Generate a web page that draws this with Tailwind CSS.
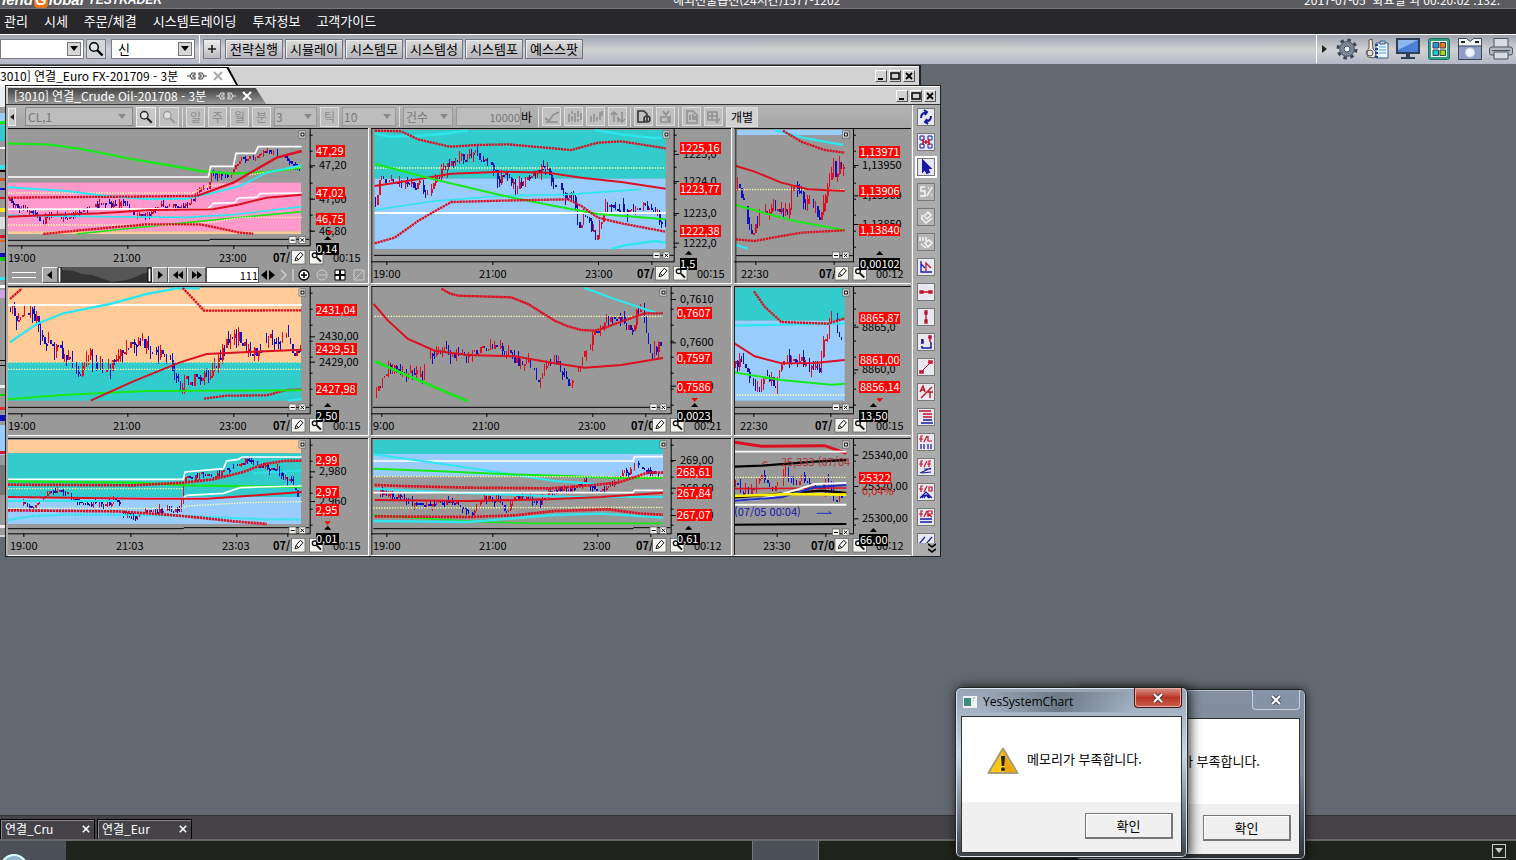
<!DOCTYPE html>
<html lang="ko">
<head>
<meta charset="utf-8">
<title>Hi-Friend Global YesTrader</title>
<script src="https://cdn.jsdelivr.net/npm/@tailwindcss/browser@4"></script>
</head>
<body class="flex h-screen flex-col overflow-hidden bg-[#636970] font-['Noto_Sans_CJK_KR',sans-serif] text-xs text-black">

<svg class="hidden">
  <symbol id="lens" viewBox="0 0 16 16"><circle cx="6" cy="6" r="4.3" fill="#e8eef2" fill-opacity=".7" stroke="currentColor" stroke-width="1.5"/><path d="M9.2 9.2L14.5 14.5" stroke="currentColor" stroke-width="2.4"/></symbol>
  <symbol id="link" viewBox="0 0 20 10"><path d="M0 5h3l2-3h3v2H6v2h2v2H5L3 5M20 5h-3l-2-3h-3v2h2v2h-2v2h3l2-3" fill="none" stroke="currentColor" stroke-width="1.1"/></symbol>
  <symbol id="close" viewBox="0 0 10 10"><path d="M1 1l8 8M9 1l-8 8" stroke="currentColor" stroke-width="2"/></symbol>
  <symbol id="down" viewBox="0 0 8 5"><path d="M0 0h8L4 5z" fill="currentColor"/></symbol>
</svg>

<header class="shrink-0">
  <div class="flex h-[9px] items-end overflow-hidden border-b border-[#77777c] bg-[#5b5b60] text-white">
    <p class="-ml-[18px] flex h-4 flex-1 items-center font-['Liberation_Sans',sans-serif] text-[15px] leading-4 font-bold italic">-Friend <span class="mx-px h-4 w-3.5 rounded-sm bg-[#e8751a] text-center">G</span>lobal <span class="ml-1 text-xs">YESTRADER</span></p>
    <p class="h-4 flex-1 pl-[60px] text-xs leading-4">해외선물옵션(24시간)1577-1202</p>
    <p class="h-4 pr-4 text-xs leading-4">2017-07-05 &nbsp;화요일 외 00:20:02 .132.</p>
  </div>
  <nav class="flex h-[25px] items-center gap-4 bg-[#28272c] pb-0.5 pl-1 text-[13px] text-white">
    <a href="#">관리</a><a href="#">시세</a><a href="#">주문/체결</a><a href="#">시스템트레이딩</a><a href="#">투자정보</a><a href="#">고객가이드</a>
  </nav>
  <div class="flex h-[30px] items-center border-t border-white bg-linear-to-b from-[#9da1ae] via-[#d2d2d5] to-[#b3b8c8] pb-0.5">
    <label class="relative flex h-5 w-[84px] items-center border border-[#777c88] bg-white"><select aria-label="종목" class="h-full w-full appearance-none bg-white"><option></option></select><span class="pointer-events-none absolute right-0.5 grid size-3.5 place-items-center border border-[#777] bg-[#d6d6d6]"><svg class="h-[5px] w-2"><use href="#down"/></svg></span></label>
    <button aria-label="검색" class="ml-0.5 grid h-5 w-5 place-items-center border border-[#777c88] bg-[#d4d6da]"><svg class="size-4"><use href="#lens"/></svg></button>
    <label class="relative ml-[5px] flex h-5 w-[84px] items-center border border-[#777c88] bg-white"><select aria-label="구분" class="h-full w-full appearance-none bg-white pl-1.5 text-[13px]"><option>신</option></select><span class="pointer-events-none absolute right-0.5 grid size-3.5 place-items-center border border-[#777] bg-[#d6d6d6]"><svg class="h-[5px] w-2"><use href="#down"/></svg></span></label>
    <span class="ml-1 h-7 w-px bg-white"></span>
    <button aria-label="추가" class="ml-[3px] grid h-5 w-[18px] place-items-center border border-[#777c88] bg-linear-to-b from-[#eee] to-[#bbb]"><svg viewBox="0 0 8 8" class="size-2"><path d="M4 0v8M0 4h8" stroke="#222" stroke-width="1.6"/></svg></button>
    <div class="ml-1 flex gap-0.5" id="quick"></div>
    <div class="ml-auto flex h-[28px] items-center gap-[7px] border-l border-white pr-[3px] pl-[5px]">
      <svg viewBox="0 0 5 8" class="mr-0.5 h-2 w-[5px]"><path d="M0 0l5 4-5 4z" fill="#222"/></svg>
      <svg viewBox="0 0 22 22" class="size-[22px]"><circle cx="11" cy="11" r="8.500" fill="none" stroke="#3c4858" stroke-width="4" stroke-dasharray="3.340 3.340"/><circle cx="11" cy="11" r="5.500" fill="none" stroke="#7c8898" stroke-width="4.500"/><circle cx="11" cy="11" r="7.300" fill="none" stroke="#4d5a6a"/><circle cx="11" cy="11" r="3" fill="#f2f6fa" stroke="#3c4858"/></svg>
      <svg viewBox="0 0 24 22" class="h-[22px] w-6"><path d="M4 2l3-1 1 10 4 4-3 5-6-1-2-5 3-4z" fill="#f3ead0" stroke="#555"/><circle cx="5" cy="15" r="3" fill="#ddd" stroke="#555"/><path d="M11 5h12v15H11z" fill="#eaf5ff" stroke="#3a5f86"/><path d="M15 3h5v3h-5z" fill="#bcd" stroke="#3a5f86"/><path d="M14 9h7M14 12h7M14 15h7" stroke="#4aa9d8"/><path d="M10 7h3M10 11h3M10 15h3M10 19h3" stroke="#1646a0" stroke-width="2"/></svg>
      <svg viewBox="0 0 24 22" class="h-[22px] w-6"><path d="M0 0h24v16H0z" fill="#2d3e57"/><path d="M2 2h20v12H2z" fill="#4b7fd6"/><path d="M2 2h20L2 12z" fill="#8fb5ee"/><path d="M10 16h4v3h5v2H5v-2h5z" fill="#2d3e57"/></svg>
      <svg viewBox="0 0 22 22" class="h-[22px] w-6"><rect x=".5" y=".5" width="21" height="21" rx="2" fill="#2c9c86" stroke="#1c6f62"/><path d="M3 3h16v16H3z" fill="#f4f4e8"/><path d="M5 4.500h5.500v5.500H5z" fill="#2a94dc" stroke="#345"/><path d="M12 4.500h5.500v5.500H12z" fill="#ee7a13" stroke="#345"/><path d="M5 12h5.500v5.500H5z" fill="#13c6cf" stroke="#345"/><path d="M12 12h5.500v5.500H12z" fill="#9fdc17" stroke="#345"/></svg>
      <svg viewBox="0 0 24 22" class="h-[22px] w-6"><path d="M.5 .5h8l3.500 3 3.500-3h8v21H.5z" fill="#f2f4f7" stroke="#3c4656"/><path d="M.5 8h23v13.500H.5z" fill="#8f9fc4" stroke="#3c4656"/><path d="M3 4h4M17 4h4" stroke="#222" stroke-width="2"/><circle cx="12" cy="14.500" r="4.500" fill="#eef2fb" stroke="#cdd6ea"/></svg>
      <svg viewBox="0 0 24 22" class="h-[22px] w-6"><path d="M5 .5h14v9H5z" fill="#d8dce2" stroke="#4a5260"/><rect x=".5" y="9" width="23" height="8" rx="2" fill="#b0b7c2" stroke="#4a5260"/><path d="M5 14h14v7H5z" fill="#d8dce2" stroke="#4a5260"/><path d="M3 12.500h18" stroke="#4a5260"/></svg>
    </div>
  </div>
</header>

<main class="relative min-h-0 flex-1 overflow-hidden bg-[#636970]">
  <!-- Rear chart window -->
  <section class="absolute top-px left-0 h-[472px] w-[921px] border-t border-r-2 border-[#222] bg-[#d2d2d2] pt-px shadow-[inset_0_1px_0_#fff]">
    <div class="flex h-[18px] items-center justify-between pr-1">
      <div class="flex h-full w-[238px] items-center bg-black pt-px whitespace-nowrap [clip-path:polygon(0_0,96%_0,100%_100%,0_100%)]">
        <div class="flex h-full w-[236px] items-center gap-1.5 bg-white pb-0.5 [clip-path:polygon(0_0,96%_0,100%_100%,0_100%)]"><span class="w-[181px]">3010] 연결_Euro FX-201709 - 3분</span><svg class="h-2.5 w-5 text-[#444]"><use href="#link"/></svg><svg class="size-2.5 text-[#aaa]"><use href="#close"/></svg></div>
      </div>
      <div class="flex gap-0.5" data-winbtns></div>
    </div>
    <div id="edge" class="h-[450px] w-[5px]"></div>
  </section>

  <!-- Front chart window -->
  <section class="absolute top-[21px] left-[5px] flex w-[936px] flex-col border border-[#222] bg-[#acacac]">
    <div class="flex h-[18px] items-center justify-between border-t border-white bg-[#d2d2d2] pr-1 pl-0.5">
      <div class="flex h-4 w-[258px] items-center gap-1.5 self-end bg-linear-to-b from-[#444] to-[#999] pl-1.5 whitespace-nowrap text-white [clip-path:polygon(0_0,96%_0,100%_100%,0_100%)]"><span class="w-[196px]">[3010] 연결_Crude Oil-201708 - 3분</span><svg class="h-2.5 w-5 text-[#ddd]"><use href="#link"/></svg><svg class="size-2.5"><use href="#close"/></svg></div>
      <div class="flex gap-0.5" data-winbtns></div>
    </div>
    <div class="flex border-t border-[#333] pl-0.5">
      <div>
        <div class="flex h-[23px] w-[903px] items-center gap-[3px] bg-linear-to-b from-[#b4b4b4] to-[#a6a6a6] text-[#777]">
          <button aria-label="접기" class="grid h-[18px] w-2 place-items-center border border-[#eee] bg-[#ccc]"><svg viewBox="0 0 4 6" class="h-1.5 w-1"><path d="M4 0v6L0 3z" fill="#222"/></svg></button>
          <label class="relative ml-1.5 flex h-[19px] w-[108px] items-center border border-[#888] bg-[#bdbdbd]"><select aria-label="종목코드" class="w-full appearance-none bg-[#bdbdbd] pl-0.5"><option>CL,1</option></select><svg class="pointer-events-none absolute right-1.5 h-[5px] w-2 text-[#888]"><use href="#down"/></svg></label>
          <button aria-label="검색" class="grid size-5 place-items-center border border-[#eee] bg-[#c8c8c8]"><svg class="size-3.5 text-[#222]"><use href="#lens"/></svg></button>
          <button aria-label="다시 검색" class="grid size-5 place-items-center border border-[#ddd] bg-[#c0c0c0]"><svg class="size-3.5 text-[#999]"><use href="#lens"/></svg></button>
          <span class="h-5 w-px bg-[#ddd]"></span>
          <button class="h-5 w-[19px] border border-[#ddd] bg-[#bebebe] leading-4 text-[#8c8c8c]">일</button>
          <button class="h-5 w-[19px] border border-[#ddd] bg-[#bebebe] leading-4 text-[#8c8c8c]">주</button>
          <button class="h-5 w-[19px] border border-[#ddd] bg-[#bebebe] leading-4 text-[#8c8c8c]">월</button>
          <button class="h-5 w-[19px] border border-[#ddd] bg-[#bebebe] leading-4 text-[#8c8c8c]">분</button>
          <label class="relative flex h-[19px] w-[43px] items-center border border-[#999] bg-[#bdbdbd]"><select aria-label="분 단위" class="w-full appearance-none bg-[#bdbdbd] pl-px"><option>3</option></select><svg class="pointer-events-none absolute right-1 h-[5px] w-2 text-[#888]"><use href="#down"/></svg></label>
          <button class="h-5 w-[19px] border border-[#ddd] bg-[#bebebe] leading-4 text-[#8c8c8c]">틱</button>
          <label class="relative flex h-[19px] w-[54px] items-center border border-[#999] bg-[#bdbdbd]"><select aria-label="틱 단위" class="w-full appearance-none bg-[#bdbdbd] pl-px"><option>10</option></select><svg class="pointer-events-none absolute right-1 h-[5px] w-2 text-[#888]"><use href="#down"/></svg></label>
          <span class="h-5 w-px bg-[#ddd]"></span>
          <label class="relative flex h-[19px] w-[50px] items-center border border-[#999] bg-[#bdbdbd]"><select aria-label="조회 기준" class="w-full appearance-none bg-[#bdbdbd] pl-0.5"><option>건수</option></select><svg class="pointer-events-none absolute right-1 h-[5px] w-2 text-[#888]"><use href="#down"/></svg></label>
          <label class="flex items-center text-black"><input aria-label="건수" value="10000" class="h-[19px] w-[65px] border border-[#999] bg-[#bdbdbd] text-right text-[11px] text-[#777]"><span class="w-[14px]">바</span></label>
          <span class="h-5 w-px bg-[#ddd]"></span>
          <div id="tools" class="flex items-center gap-[3px]"></div>
          <button class="h-5 w-8 border border-[#ddd] bg-[#d2d2d2] leading-4 text-black">개별</button>
        </div>
        <div id="charts" class="grid w-[903px] grid-cols-[361px_361px_177px] gap-0.5"></div>
      </div>
      <aside class="ml-px flex flex-1 flex-col border-l border-white">
        <div id="side" class="flex h-[438px] flex-col gap-[7px] overflow-hidden pt-[3px] pl-1"></div>
        <svg viewBox="0 0 8 10" class="mr-1 h-2.5 w-2 self-end"><path d="M0 1l4 3 4-3M0 6l4 3 4-3" fill="none" stroke="#000" stroke-width="1.6"/></svg>
      </aside>
    </div>
  </section>
</main>

<footer class="shrink-0">
  <div class="flex h-6 items-end gap-0.5 border-t border-[#333] bg-[#454348] text-white">
    <div class="flex h-5 w-[95px] items-center justify-between border border-b-0 border-black px-1 pb-0.5 shadow-[inset_1px_1px_0_#888]"><span>연결_Cru</span><button aria-label="연결_Cru 닫기"><svg class="size-2"><use href="#close"/></svg></button></div>
    <div class="flex h-5 w-[95px] items-center justify-between border border-b-0 border-black px-1 pb-0.5 shadow-[inset_1px_1px_0_#888]"><span>연결_Eur</span><button aria-label="연결_Eur 닫기"><svg class="size-2"><use href="#close"/></svg></button></div>
  </div>
  <div class="relative flex h-[21px] overflow-hidden border-t-2 border-[#666] bg-[#20221c]">
    <span class="h-full w-[66px] bg-[#4b5156]"></span><span class="h-full flex-[51] border-r border-[#777]"></span><span class="h-full w-[65px] bg-[#4b5156]"></span><span class="h-full flex-[50] border-l border-[#777]"></span>
    <button aria-label="메시지 목록" class="mr-2.5 grid h-3.5 w-3.5 place-items-center self-center border border-[#ccc]"><svg class="h-[5px] w-2 text-[#ccc]"><use href="#down"/></svg></button>
    <span class="absolute top-[13px] left-0 size-[28px] rounded-full border-2 border-[#dff] bg-[#8fb6cf]"></span>
  </div>
</footer>

<!-- Message boxes -->
<section role="dialog" aria-label="YesSystemChart" class="absolute top-[689px] left-[1074px] flex w-[232px] flex-col rounded-md border border-[#222] bg-linear-to-b from-[#8490a0] via-[#7d8a9c] to-[#2c3236] px-[5px] pb-1 shadow-[0_0_10px_#000a,inset_0_0_0_1px_#b9c4d0]">
  <div class="flex h-7 items-start justify-end"><button aria-label="닫기" class="grid h-5 w-12 place-items-center rounded-b border border-t-0 border-[#c5d0dc] bg-[#8493a6]"><svg viewBox="0 0 12 10" class="h-2.5 w-3"><path d="M2 1l8 8M10 1l-8 8" stroke="#445" stroke-width="4"/><path d="M2 1l8 8M10 1l-8 8" stroke="#fff" stroke-width="2.200"/></svg></button></div>
  <div class="border border-[#333] bg-white">
    <p class="h-[85px] pr-[39px] text-right text-[13px] leading-[83px]">메모리가 부족합니다.</p>
    <div class="flex h-[50px] items-start justify-end bg-[#f0f0f0] pt-[11px] pr-2"><button class="h-[26px] w-[88px] border border-r-2 border-b-2 border-[#777] bg-[#f0f0f0] text-[13px] leading-5 shadow-[inset_1px_1px_0_#fff]">확인</button></div>
  </div>
</section>
<section role="dialog" aria-labelledby="dlg" class="absolute top-[687px] left-[955px] flex w-[233px] flex-col rounded-md border border-[#222] bg-linear-to-b from-[#95a3b3] via-[#c5d5e8] via-40% to-[#3c454c] px-[5px] pb-1 shadow-[2px_0_12px_#000c,inset_0_0_0_1px_#dde6ee]">
  <div class="flex h-7 items-start">
    <svg viewBox="0 0 14 12" class="mt-2 mr-1.5 ml-0.5 h-3 w-3.5"><path d="M0 0h14v12H0z" fill="#f0f0f0"/><path d="M1 2h7v8H1z" fill="#3c8e7c"/><path d="M10 2h2M10 5h1" stroke="#99a"/></svg>
    <h2 id="dlg" class="mt-1 flex-1 bg-linear-to-r from-transparent via-[#6c7a88] to-transparent font-['Open_Sans',sans-serif] text-xs leading-5">YesSystemChart</h2>
    <button aria-label="닫기" class="grid h-5 w-12 place-items-center rounded-b border border-t-0 border-[#411] bg-linear-to-b from-[#d8938a] via-[#b83325] to-[#c8604e] shadow-[inset_0_0_0_1px_#e8b0a8]"><svg viewBox="0 0 12 10" class="h-2.5 w-3"><path d="M2 1l8 8M10 1l-8 8" stroke="#533" stroke-width="4"/><path d="M2 1l8 8M10 1l-8 8" stroke="#fff" stroke-width="2.200"/></svg></button>
  </div>
  <div class="border border-[#333] bg-white">
    <div class="flex h-[85px] items-center gap-2 pb-0.5 pl-[25px]">
      <svg viewBox="0 0 32 28" class="mt-1 h-7 w-8"><path d="M16 1.500L30.500 26H1.500z" fill="#fbc914" stroke="#a99a72" stroke-width="2" stroke-linejoin="round"/><path d="M16 4L28 25H18z" fill="#f0a40c"/><path d="M14 9h4l-.8 10h-2.400z" fill="#222"/><circle cx="16" cy="22.200" r="1.900" fill="#222"/></svg>
      <p class="text-[13px]">메모리가 부족합니다.</p>
    </div>
    <div class="flex h-[50px] items-start justify-end bg-[#f0f0f0] pt-[11px] pr-2"><button class="h-[26px] w-[88px] border border-r-2 border-b-2 border-[#777] bg-[#f0f0f0] text-[13px] leading-5 shadow-[inset_1px_1px_0_#fff]">확인</button></div>
  </div>
</section>

<script>
const K='#000',R='#dc1020',C='#2ee6ee',G='#18e818',W='#fff',Y='#ffffa8',B='#1010c0';
const TEAL='#33cccc',SKY='#99ccff',PEACH='#ffcc99',PINK='#ff99cc';
// Curves and labels use thirds of a pixel. Line: [colour, width, dash, points]; label: [text, y]; time: [text, x]
const charts=[
{vb:[8,2,360,138],ax:929,ay:358,my:332,vol:'24,343 628,343 630,340 928,340',x0:24,x1:903,
 bands:[[PINK,170,316],[PEACH,316,324]],
 lines:[[G,7,'','24,52 150,56 250,70 400,100 520,120 600,135 700,143 800,138 905,125'],[W,5,'','24,153 625,153 632,121 700,121 708,82 765,82 775,62 905,62'],
 [Y,4,'4 4','24,201 580,201 600,190 630,178 690,176 740,148 905,122'],[C,6,'','24,184 100,188 200,195 320,210 450,220 560,218 640,200 720,180 800,140 905,118'],
 [R,7,'7 2','24,215 590,210'],[R,7,'','590,210 640,192 700,170 760,135 830,95 905,75'],[W,5,'','24,250 625,248 640,232 705,230 715,216 770,214 780,203 905,201'],
 [C,5,'','24,268 300,272 560,274 700,266 905,242'],[R,6,'','24,272 150,267 300,262 450,252 640,250 720,235 800,215 905,206'],
 [G,5,'','230,324 400,306 560,290 700,276 905,257'],[Y,4,'4 4','24,297 540,297 640,288 720,274 905,274'],[R,7,'7 2','130,324 250,312 440,295 600,295 650,305 720,320 760,323']],
 c:'28,225 50,238 80,250 110,262 125,295 140,268 200,270 280,240 330,235 380,228 395,265 430,268 480,240 530,242 580,220 600,185 625,190 632,140 660,150 690,140 720,100 745,100 790,72 830,85 870,105 885,115 903,150',amp:14,
 ys:[['47,20',118],['47,00',218],['46,80',314]],tags:[['47,29',73],['47,02',201],['46,75',279]],box:['0,14',368],up:[983,336],dn:[990,320],
 ts:[['19:00',25],['21:00',340],['23:00',658]],tick:[64,382,700,862],d:['07/',818],e:'00:15'},
{vb:[3,2,360,155],ax:917,ay:406,my:378,vol:'18,388 917,388',x0:20,x1:893,left:10,
 bands:[[TEAL,12,158],[SKY,158,369]],
 lines:[[W,6,'','20,261 893,261'],[Y,4,'4 4','20,126 893,126'],[C,7,'','20,22 60,32 140,30 220,24 300,14'],[C,7,'','680,12 760,25 860,36 893,34'],[R,7,'7 2','20,14 100,16 150,40 245,62 330,57 420,55 610,72 690,50 760,46 893,67'],
 [R,6,'','20,180 150,160 250,143 400,137 540,140 640,155 760,168 893,188'],[C,5,'','20,252 200,225 400,210 600,205 820,190'],[G,6,'','20,113 190,158 400,208 560,240 690,264 893,280'],[C,7,'','730,369 770,358 860,345 893,350'],
 [R,7,'7 2','20,352 80,335 150,285 200,256 250,228 400,224 600,220 640,240 690,275 760,292 893,317']],
 c:'22,225 35,160 60,165 120,180 150,175 180,205 205,150 230,130 260,100 300,90 318,75 340,105 370,110 390,170 410,135 440,185 480,160 510,130 540,130 555,175 575,170 595,220 615,200 630,300 655,265 682,340 700,280 715,240 760,245 800,260 820,240 860,265 893,290',amp:24,
 ys:[['1225,0',84],['1224,0',165],['1223,0',261],['1222,0',350]],tags:[['1225,16',66],['1223,77',188],['1222,38',315]],box:['1,5',413],up:[962,380],
 ts:[['19:00',15],['21:00',332],['23:00',650]],tick:[55,373,690,850],d:['07/',806],e:'00:15'},
{vb:[6,68,177,155],ax:375,ay:604,my:576,vol:'24,587 375,587',x0:28,x1:350,left:22,
 bands:[[SKY,210,225]],
 lines:[[C,7,'','140,210 220,232 345,255'],[R,7,'7 2','165,212 220,245 290,270 350,278'],[Y,4,'4 4','24,389 350,389'],[R,6,'','24,318 80,335 160,368 240,388 350,393'],[G,6,'','24,435 120,462 200,483 350,511'],[R,7,'7 2','24,538 80,543 150,530 220,518 350,511'],[C,7,'','24,555 60,566']],
 c:'28,380 45,420 68,530 80,490 100,460 130,450 150,440 180,465 190,395 200,385 230,420 260,430 275,475 290,430 305,370 315,300 325,370 335,300 348,340',amp:30,
 ys:[['1,13950',315],['1,13900',406],['1,13850',492]],tags:[['1,13971',275],['1,13906',393],['1,13840',509]],box:['0,00102',610],up:[455,579],
 ts:[['22:30',40]],tick:[82,317],d:['07/',272],e:'00:12'},
{vb:[8,2,360,149],ax:929,ay:388,my:360,vol:'24,370 928,370',x0:24,x1:903,
 bands:[[PEACH,12,235],[TEAL,235,350]],
 lines:[[W,6,'','24,63 905,63'],[Y,3,'4 4','24,235 905,235'],[Y,4,'4 4','24,256 905,256'],[C,7,'','30,175 110,120 190,88 330,60 440,30 530,13 600,13'],[R,7,'7 2','30,45 65,14'],[R,7,'7 2','548,12 580,45 612,80 905,79'],[R,7,'7 2','612,344 680,335 800,334 860,318 905,317'],
 [G,6,'','24,346 200,332 440,321 905,319'],[R,6,'','272,350 400,292 540,235 620,210 760,203 905,197'],[C,7,'','865,350 905,345']],
 c:'30,70 45,95 60,115 75,80 95,75 110,120 130,170 160,190 200,220 240,265 270,215 290,255 330,250 350,215 390,185 430,180 460,205 500,215 520,270 540,320 560,290 600,285 625,270 650,250 680,170 715,155 740,195 780,210 800,160 830,180 860,160 885,220 903,195',amp:32,
 ys:[['2430,00',157],['2429,00',233]],tags:[['2431,04',76],['2429,51',194],['2427,98',314]],box:['2,50',394],up:[983,363],
 ts:[['19:00',24],['21:00',340],['23:00',658]],tick:[64,382,700,862],d:['07/',818],e:'00:15'},
{vb:[3,2,360,149],ax:908,ay:388,my:360,vol:'14,370 907,370',x0:15,x1:885,left:10,bands:[],
 lines:[[Y,4,'4 4','20,97 885,97'],[C,6,'','650,12 740,45 830,75 885,92'],[R,7,'7 1','220,14 245,28 270,35 430,40 480,60 560,110 600,127 640,138 680,140 710,132 740,120 830,88 885,88'],[R,6,'','17,60 60,110 120,165 200,200 300,213 440,217 560,238 650,251 760,243 885,222'],[G,8,'','20,232 120,275 300,352']],
 c:'25,325 40,290 70,240 110,275 140,260 165,275 190,200 230,200 270,212 320,200 365,190 400,190 440,230 490,245 512,290 540,230 570,240 600,300 630,250 650,210 680,140 720,105 760,105 790,145 805,85 825,75 845,215 860,200 880,170',amp:26,
 ys:[['0,7610',45],['0,7600',175],['0,7590',305]],tags:[['0,7607',87],['0,7597',221],['0,7586',309]],box:['0,0023',394],up:[980,363],dn:[980,347],
 ts:[['9:00',15],['21:00',313],['23:00',631]],tick:[40,355,673,832],d:['07/0',788],e:'00:21'},
{vb:[6,2,177,149],ax:375,ay:388,my:360,vol:'16,370 375,370',x0:18,x1:350,left:18,
 bands:[[TEAL,12,110],[SKY,110,350]],
 lines:[[C,7,'','18,125 350,118'],[R,7,'7 2','78,22 110,68 160,114 300,119 350,103'],[Y,4,'4 4','18,333 350,333'],[R,6,'','18,177 80,217 160,238 260,237 350,228'],[G,6,'','18,265 160,288 310,302 350,299']],
 c:'22,240 45,225 70,310 95,310 115,265 140,310 160,230 200,225 240,245 275,270 285,180 300,160 310,80 325,120 350,195',amp:28,
 ys:[['8865,0',128],['8860,0',256]],tags:[['8865,87',101],['8861,00',227],['8856,14',308]],box:['13,50',394],up:[436,363],dn:[455,348],
 ts:[['22:30',35]],tick:[76,307],d:['07/',262],e:'00:15'},
{vb:[8,2,360,117],ax:929,ay:292,my:273,vol:'24,278 550,278 552,275 928,275',x0:24,x1:903,
 bands:[[PEACH,12,52],[TEAL,52,183],[SKY,183,264]],
 lines:[[W,5,'','24,130 550,130 555,108 670,98 680,75 715,70 725,63 905,63'],[G,7,'','24,136 400,140 560,148 905,153'],[Y,4,'4 4','24,158 550,158'],[C,7,'7 3','760,112 905,103'],[R,8,'7 2','24,146 400,148 550,140 640,130 730,108 790,85 850,75 905,74'],
 [W,5,'','550,185 560,178 670,172 720,155 780,153 905,150'],[C,6,'','24,195 350,195'],[R,6,'','24,183 440,188 620,188 740,180 905,168'],[Y,4,'4 4','24,217 545,217 560,210 740,200 905,197'],[C,7,'7 2','24,252 100,240 200,236 500,238 800,250 905,250'],[R,8,'7 2','24,223 350,226 500,236 600,245 700,256 800,264']],
 c:'70,200 100,210 140,175 185,155 220,195 250,200 300,205 350,195 375,235 405,243 440,225 480,225 540,220 552,120 580,130 600,110 650,120 690,95 740,75 780,95 830,95 850,130 875,135 890,180 903,160',amp:14,
 ys:[['2,980',106],['2,960',195]],tags:[['2,99',72],['2,97',168],['2,95',221]],box:['0,01',308],up:[983,275],dn:[983,261],
 ts:[['19:00',30],['21:03',348],['23:03',667]],tick:[70,391,709,862],d:['07/',818],e:'00:15'},
{vb:[3,2,360,117],ax:908,ay:292,my:273,vol:'16,278 795,278 797,275 907,275',x0:16,x1:885,left:10,
 bands:[[TEAL,12,54],[SKY,54,120]],
 lines:[[W,5,'','16,75 795,75 800,62 885,62'],[C,6,'','16,55 200,80 400,110 560,135 700,145'],[G,6,'','16,98 200,105 420,115 600,120 740,126 885,126'],[Y,4,'4 4','16,122 885,122'],[R,8,'7 2','20,147 100,150 300,155 540,157 620,152 750,140 840,110 885,110'],
 [C,6,'','16,158 300,172 600,182 885,183'],[W,5,'','16,170 795,170 800,163 885,163'],[R,6,'','20,192 300,195 540,190 700,183 885,170'],[Y,4,'4 4','16,216 885,214'],[G,5,'','16,238 350,258 500,262 885,262'],[C,7,'','16,255 300,258 400,250 560,237 700,233 885,245'],[R,8,'7 2','20,241 300,243 440,238 560,225 720,220 820,233 885,236']],
 c:'35,170 100,185 165,210 210,200 260,200 305,230 350,185 390,190 410,230 440,180 480,185 515,200 540,170 600,160 650,138 690,170 740,140 765,105 780,115 800,80 830,100 885,130',amp:14,
 ys:[['269,00',72],['268,00',155],['267,00',237]],tags:[['268,61',107],['267,84',170],['267,07',235]],box:['0,61',307],up:[962,275],
 ts:[['19:00',15],['21:00',332],['23:00',646]],tick:[55,373,688,847],d:['07/',803],e:'00:12'},
{vb:[6,154,177,117],ax:375,ay:748,my:735,vol:'',x0:18,x1:355,left:18,bands:[],
 lines:[[R,9,'','20,475 100,487 290,485 355,508'],[W,5,'','20,503 355,503'],[K,7,'','20,548 100,545 260,533 355,528'],[Y,4,'4 4','20,580 355,580'],[R,5,'','20,614 355,612'],[K,7,'','20,640 280,620 355,627'],[W,6,'','20,650 100,645 180,625 260,600 355,597'],['#2030c0',6,'','20,650 160,640 260,610 355,603'],['#ffee00',8,'','20,636 200,630 355,632'],[W,6,'','20,662 355,662'],[K,6,'','20,722 355,720'],['#2030c0',3,'','266,688 310,688 302,682'],[R,3,'','102,540 108,534 118,534']],
 c:'20,605 40,620 70,620 100,560 130,615 160,590 180,570 200,600 220,575 240,610 300,600 315,650 345,640',amp:26,wide:8,
 notes:[['25,333 (07/04','#b03030',160,535],['(07/05 00:04)','#1515b0',18,683]],
 ys:[['25340,00',512],['25320,00',606],['25300,00',703]],tags:[['25322',582]],pct:['0,04%',622],box:['66,00',768],up:[436,738],
 ts:[['23:30',104]],tick:[146,292],d:['07/0',248],e:'00:12'}];

let seed=7;const rnd=()=>(seed=(seed*16807)%2147483647)/2147483647;
const q=v=>Math.round(v/3);
const P=s=>s.split(' ').map(p=>p.split(',').map(Number));
const wOf=t=>[...t].reduce((a,c)=>a+(/[,:]/.test(c)?3:6),2);
const text=(t,x,y,f,b)=>`<text x="${q(x)}" y="${q(y)}" fill="${f}"${b?' font-weight="bold"':''}>${t}</text>`;
function candles(c){
  const pts=P(c.c),step=c.wide||6,snap=v=>Math.round(v/3)*3;let out='',prev=pts[0][1],i=0;
  for(let x=pts[0][0];x<=pts[pts.length-1][0];x+=step){
    while(i<pts.length-2&&x>pts[i+1][0])i++;
    const [a,b]=[pts[i],pts[i+1]],y=snap(a[1]+(b[1]-a[1])*(x-a[0])/(b[0]-a[0])+(rnd()-.5)*c.amp*1.1);
    const col=y<prev?R:B,top=Math.min(y,prev),h=Math.max(Math.abs(y-prev),6),w=rnd()>.4?6:3,px=snap(x);
    if(rnd()>.45)out+=`<rect x="${px}" y="${snap(top-rnd()*c.amp*.8)}" width="3" height="${snap(h+c.amp*(.4+rnd()*.7))}" fill="${col}"/>`;
    if(rnd()>.15)out+=`<rect x="${px}" y="${top}" width="${w}" height="${h}" fill="${col}"/>`;
    prev=y;
  }
  return out;
}
function draw(c){
  const [vx,vy,vw,vh]=c.vb,{ax,ay}=c,r=(x,y,w,h,f)=>`<rect x="${x}" y="${y}" width="${w}" height="${h}" fill="${f}"/>`;
  const frame=(x,y,w,h)=>`<rect x="${x}" y="${y}" width="${w}" height="${h}" fill="#f4f4f0" stroke="#555" stroke-width="2"/>`;
  let s=c.bands.map(b=>r(c.x0,b[1],c.x1-c.x0,b[2]-b[1],b[0])).join('');
  s+=candles(c);
  s+=c.lines.map(l=>`<polyline points="${l[3]}" fill="none" stroke="${l[0]}" stroke-width="${l[1]}" stroke-dasharray="${l[2]}"/>`).join('');
  if(c.vol)s+=`<polyline points="${c.vol}" fill="none" stroke="#000" stroke-width="3"/>`;
  s+=r(vx*3,vy*3,vw*3,3,'#111')+(c.left?r(c.left,vy*3,3,vh*3,'#222'):'');
  s+=r(ax,vy*3,3,ay-vy*3,K)+r(vx*3,ay,ax-vx*3+3,3,K);
  s+=c.tick.map(t=>r(t,ay,3,11,K)).join('');
  for(let y=vy*3+20;y<ay-10;y+=48)s+=r(ax,y,9,3,K);
  s+=c.ys.map(l=>r(ax,l[1],16,3,K)).join('');
  s+=frame(ax-32,vy*3+9,20,21)+`<rect x="${ax-26}" y="${vy*3+15}" width="9" height="9" fill="#fff" stroke="#000" stroke-width="3"/>`;
  s+=frame(ax-62,c.my,21,20)+r(ax-57,c.my+9,12,3,K)+frame(ax-32,c.my,20,20)+`<path d="M${ax-27} ${c.my+5}l10 10m0-10l-10 10" stroke="#000" stroke-width="3"/>`;
  const by=ay+15;
  const icons=frame(ax-54,by,40,41)+`<path d="M${ax-44} ${by+31}l3-10 13-15 8 7-13 15-11 3m3-10l8 7" fill="#fff" stroke="#111" stroke-width="3"/>`
    +frame(ax,by,40,41)+`<circle cx="${ax+15}" cy="${by+15}" r="7" fill="none" stroke="#111" stroke-width="4"/><path d="M${ax+21} ${by+21}l13 13" stroke="#111" stroke-width="6"/>`;
  let t=(c.notes||[]).map(n=>text(n[0],n[2],n[3]+12,n[1])).join('');
  t+=c.ys.map(l=>text(l[0],ax+28,l[1]+12,K)).join('');
  if(c.pct)t+=text(c.pct[0],ax+26,c.pct[1]+12,'#d01515');
  const tag=(l,f)=>`<rect x="${q(ax+19)}" y="${q(l[1]-17)}" width="${wOf(l[0])}" height="12" fill="${f}"/>`+text(l[0],ax+20,l[1]+13,W);
  t+=c.tags.map(l=>tag(l,'#f00')).join('');
  t+=c.ts.map(l=>text(l[0],l[1],ay+50,K)).join('')+text(c.d[0],c.d[1],ay+50,K,1);
  let z=`<path d="M${c.up[0]-11} ${c.up[1]+6}h22l-11-12z" fill="#000"/>`+(c.dn?`<path d="M${c.dn[0]-10} ${c.dn[1]-5}h20l-10 11z" fill="#e00"/>`:'');
  return `<svg viewBox="${c.vb.join(' ')}" width="${vw}" height="${vh}" class="block bg-[#999999] text-[11px]"><g transform="scale(.333333)">${s}</g>${t}<g transform="scale(.333333)">${icons}${z}</g>${text(c.e,ax+69,ay+50,K)}${tag(c.box,K)}</svg>`;
}
const btn=(d,w)=>`<button aria-label="이동" class="grid h-4 place-items-center border border-[#eee] border-r-[#555] border-b-[#555] bg-[#a8a8a8] ${w}"><svg viewBox="0 0 12 8" class="h-2 w-3"><path d="${d}" fill="#000"/></svg></button>`;
const scroll=`<div class="flex h-[17px] items-center bg-[#999999] pl-1">
<span class="mr-1.5 h-1.5 w-6 border-y border-white"></span>${btn('M8 0v8L3 4z','w-4')}
<svg viewBox="0 0 94 16" class="h-4 w-[94px]"><path d="M0 0h94v16H0z" fill="#555"/><path d="M4 3l12 1 8 3 10 1 12 4 8 3 14-2 10-3 8-4 12-2v12H4z" fill="#333"/><path d="M0 0h3v16H0zM90 1h3v14h-3z" fill="#fff" stroke="#000"/></svg>
${btn('M4 0v8l5-4z','w-4')}${btn('M6 0v8L1 4zM11 0v8L6 4z','w-[19px]')}${btn('M1 0v8l5-4zM6 0v8l5-4z','w-[19px]')}
<input aria-label="봉 개수" value="111" class="h-4 w-[53px] border border-[#555] bg-white text-right text-[11px]">
<svg viewBox="0 0 104 16" class="ml-0.5 h-4 w-[104px]"><path d="M6 3v10L0 8zM8 3v10l6-5z" fill="#000"/><path d="M20 3l5 5-5 5M32 2v12" fill="none" stroke="#ccc" stroke-width="1.5"/><circle cx="43" cy="8" r="5" fill="#fff" stroke="#000" stroke-width="1.300"/><path d="M40 8h6M43 5v6" stroke="#000" stroke-width="1.500"/><circle cx="61" cy="8" r="5" fill="none" stroke="#ccc"/><path d="M58 8h7" stroke="#ccc"/><path d="M74 3h10v10H74z" fill="#fff" stroke="#000"/><path d="M74 8h10M79 3v10" stroke="#000" stroke-width="2"/><path d="M93 3h10v10H93zM94 12l8-8" fill="none" stroke="#ccc"/></svg></div>`;
document.getElementById('charts').innerHTML=charts.map((c,i)=>`<div class="border-r border-b border-white">${draw(c)}${i?'':scroll}</div>`).join('');

document.getElementById('quick').innerHTML=['전략실행','시뮬레이','시스템모','시스템성','시스템포','예스스팟'].map(t=>`<button class="h-5 w-[58px] overflow-hidden border border-[#6f7480] bg-linear-to-b from-[#ddd] to-[#b4b4b8] text-[13px] leading-4 whitespace-nowrap shadow-[inset_1px_1px_0_#eee]">${t}</button>`).join('');
document.querySelectorAll('[data-winbtns]').forEach(e=>e.innerHTML=[['최소화','M2 8h5','2'],['최대화','M1 2h8v6H1z','1.5'],['닫기','M2 2l6 6M8 2l-6 6','1.8']].map(b=>`<button aria-label="${b[0]}" class="size-3 border border-white border-r-[#555] border-b-[#555] bg-[#d2d2d2]"><svg viewBox="0 0 10 10" class="size-2.5"><path d="${b[1]}" fill="none" stroke="#000" stroke-width="${b[2]}"/></svg></button>`).join(''));

const tool=(d,k)=>`<button aria-label="도구" class="grid size-[19px] place-items-center border border-[#ddd] bg-[#c0c0c0]"><svg viewBox="0 0 16 16" class="size-4"><path d="${d}" fill="none" stroke="${k?'#333':'#909090'}" stroke-width="1.6"/></svg></button>`;
const sep='<span class="h-5 w-px bg-[#ddd]"></span>';
document.getElementById('tools').innerHTML=tool('M1 9l4 3 4-6 6-3M2 13h12')+tool('M3 5v8M6 2v3M6 7v5M9 4v9M12 2v6M12 10v3M15 4v7')+tool('M3 7v6M6 5v8M9 8v4M12 3v8M14 2v5')+tool('M4 13V3M1 6l3-3 3 3M8 8v5M12 3v10M9 10l3 3 3-3')+sep+tool('M9 13H2V2h6l3 3v2M8 10a3 3 0 1 0 6 0 3 3 0 1 0-6 0M11 8v4',1)+tool('M3 8v5h9V8M2 8h11M5 2l3 4 3-4M10 9v3')+sep+tool('M3 2h6l4 4v8H3zM6 6v5M9 5v6M11 7v4')+tool('M2 3h9v8H2zM2 7h9M6 3v8M10 14l4-4');

const ico={r:'#c0102a',b:'#1818a8',w:'#f4f4f4'};
const side=[
 [['b','M3 9c0-4 2-5 6-6M6 1l3 2-2 3M13 7c0 4-2 5-6 6M10 15l-3-2 2-3',2]],
 [['b','M2 2h4v4H2zM10 2h4v4h-4zM2 10h4v4H2zM10 10h4v4h-4z',1],['r','M5 5v6M11 5v6M5 8h6M8 6v4',1.5]],
 [['b','M5 2v10l2-2 2 4 2-1-2-4h3z',2]],
 [['w','M7 3H3v4h4v5H2M9 12l5-9M10 4h1M13 11h1',1.5]],
 [['w','M6 7l4-4 3 3-4 4zM3 9l5 5 6-5M4 6v5',1.5]],
 [['w','M2 3v4M5 3v4M8 3v4M7 9l4-3 3 3-4 4zM3 10l5 4',1.5]],
 [['b','M3 2v11h11M3 5l4 4',1.300],['r','M8 12V4l5 5',1.300]],
 [['r','M3 8h10M2 7h3v2H2zM11 7h3v2h-3z',1.300]],
 [['r','M8 3v10M7 2h2v3H7zM7 11h2v3H7z',1.300]],
 [['b','M4 5v4M3 6h2v3H3M4 12v2h9V8',1.5],['r','M12 2v6M11 2h2v2h-2z',1.500]],
 [['r','M2 12h3v2H2zM11 2h3v2h-3z',1.6],['r','M3 13L13 3',1]],
 [['r','M2 8l3-6 2 6M3 6h4M3 14L14 3M9 8h6M12 8v6',1.400]],
 [['r','M1 2h12M5 5h9M5 8h9',1.300],['b','M5 11h9M3 14h12',1.3]],
 [['r','M5 2H3v6M1 5h4M6 8l3-6M10 2v5h4',1.200],['b','M3 10v5M6 10v5M10 10v5M13 10v5',1.200]],
 [['r','M5 2H3v6M1 5h4M6 8l3-6M13 2h-2v6M9 5h4',1.200],['b','M2 14l11-5M4 14l9-1M6 10h7',1.2]],
 [['r','M5 2H3v6M1 5h4M6 8l3-6M11 3h3v4h-3z',1.200],['b','M2 14l6-6 6 6M4 14c2-4 6-4 8 0M6 14l2-3 3 3',1.200]],
 [['r','M5 2H3v6M1 5h4M6 8l3-6M10 8V2h4v3h-4l4 3',1.2],['b','M2 10h12M2 13h12',1.300]],
 [['b','M1 10l6-7M8 10l6-7',1.2]]];
document.getElementById('side').innerHTML=side.map((s,i)=>`<button aria-label="그리기 도구 ${i+1}" class="grid size-[18px] shrink-0 place-items-center border border-[#777] ${i>2&&i<6?'bg-[#b4b4b4]':'bg-[#e8e8f0]'} ${i==2?'shadow-[0_0_0_2px_#fff]':''}"><svg viewBox="0 0 16 16" class="size-4">${s.map(p=>`<path d="${p[1]}" fill="${i==2?'#1818a8':'none'}" stroke="${ico[p[0]]}" stroke-width="${p[2]}"/>`).join('')}</svg></button>`).join('');

// Slivers of the rear window's charts: [colour, y, height]
document.getElementById('edge').innerHTML='<svg viewBox="0 0 5 450" class="h-[450px] w-[5px]">'+[['#999',0,450],['#eee',0,22],['#9cf',28,8],['#0e0',36,3],['#3cc',40,16],['#fff',62,2],['#2ee6ee',80,4],['#000',85,2],['#dc5020',93,3],['#1010c0',103,2],['#dc1020',112,2],['#ffee00',123,4],['#ddd',132,12],['#dc1020',150,3],['#d60',155,2],['#1010c0',168,4],['#0c0',172,4],['#2ee6ee',192,3],['#fff',200,3],['#d0a0e0',205,8],['#000',275,1],['#000',280,1],['#eee',300,3],['#0c0',309,2],['#d33',322,3],['#1010c0',330,6],['#9cf',340,30],['#dc1020',366,3],['#777',380,30],['#eee',440,3]].map(b=>`<path d="M0 ${b[1]}h5v${b[2]}H0z" fill="${b[0]}"/>`).join('')+'</svg>';
</script>
</body>
</html>
